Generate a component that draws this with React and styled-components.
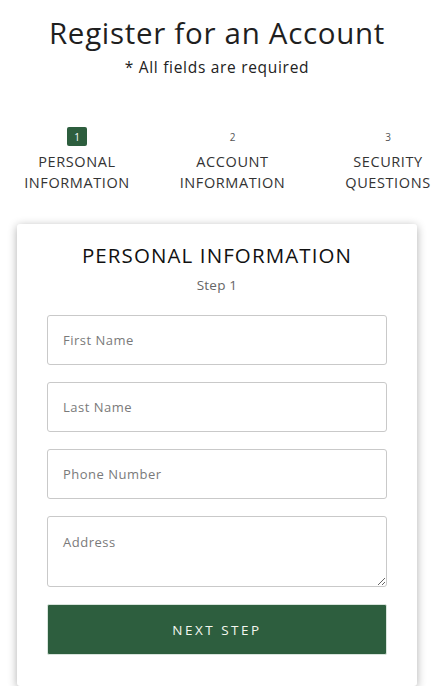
import React from 'react';
import styled, { createGlobalStyle } from 'styled-components';

const GlobalStyle = createGlobalStyle`
  html, body {
    margin: 0;
    padding: 0;
    background: #ffffff;
    overflow-x: hidden;
  }
  body {
    font-family: 'Open Sans', 'Liberation Sans', sans-serif;
    color: #222;
  }
  * {
    box-sizing: border-box;
  }
`;

const Page = styled.div`
  width: 442px;
  padding-top: 14px;
`;

const Header = styled.header`
  width: 434px;
  text-align: center;
`;

const Title = styled.h1`
  margin: 0;
  font-size: 29.5px;
  font-weight: 400;
  line-height: 38px;
  color: #1f1f1f;
  letter-spacing: 0.7px;
`;

const Subtitle = styled.p`
  margin: 4px 0 0;
  font-size: 15.5px;
  line-height: 22px;
  color: #222;
  letter-spacing: 0.7px;
`;

const Steps = styled.ol`
  list-style: none;
  margin: 0;
  padding: 0 0 0 21px;
  margin-top: 49px;
  display: grid;
  grid-template-columns: repeat(3, 112px);
  column-gap: 43.5px;
`;

const Step = styled.li`
  display: flex;
  flex-direction: column;
  align-items: center;
  text-align: center;
`;

const StepNumber = styled.span`
  width: 20px;
  height: 19px;
  border-radius: 2px;
  display: flex;
  align-items: center;
  justify-content: center;
  font-size: 10px;
  background: ${({ $active }) => ($active ? '#2d5e3e' : 'transparent')};
  color: ${({ $active }) => ($active ? '#ffffff' : '#555')};
`;

const StepLabel = styled.span`
  margin-top: 5px;
  font-size: 14.5px;
  line-height: 21px;
  color: #333;
  white-space: nowrap;
  letter-spacing: 0.6px;
`;

const Card = styled.section`
  width: 400px;
  margin: 31px 0 0 17px;
  background: #fff;
  border-radius: 3px;
  box-shadow: 0 2px 10px rgba(0, 0, 0, 0.32);
  padding: 17px 30px 31px;
  display: flex;
  flex-direction: column;
`;

const CardTitle = styled.h2`
  margin: 0;
  text-align: center;
  font-size: 20.5px;
  font-weight: 400;
  line-height: 28px;
  color: #111;
  letter-spacing: 1.1px;
`;

const CardStep = styled.p`
  margin: 6px 0 0;
  text-align: center;
  font-size: 13.5px;
  line-height: 20px;
  color: #666;
  letter-spacing: 0.2px;
`;

const Fields = styled.div`
  margin-top: 20px;
  display: flex;
  flex-direction: column;
  gap: 17px;
`;

const fieldStyle = `
  width: 100%;
  border: 1px solid #c9c9c9;
  border-radius: 3px;
  padding: 0 15px;
  font-family: 'Open Sans', 'Liberation Sans', sans-serif;
  font-size: 13px;
  letter-spacing: 0.5px;
  color: #333;
  background: #fff;
  outline: none;
  &::placeholder {
    color: #7a7a7a;
  }
`;

const Input = styled.input`
  ${fieldStyle}
  height: 50px;
`;

const TextArea = styled.textarea`
  ${fieldStyle}
  height: 71px;
  padding-top: 16px;
  resize: vertical;
  display: block;
`;

const NextButton = styled.button`
  margin-top: 17px;
  height: 51px;
  width: 100%;
  border: 1px solid #d8e4dc;
  border-radius: 2px;
  background: #2d5e3e;
  color: #f4f7ef;
  font-family: 'Open Sans', 'Liberation Sans', sans-serif;
  font-size: 13.5px;
  letter-spacing: 2.5px;
  cursor: pointer;
`;

const steps = [
  { n: 1, lines: ['PERSONAL', 'INFORMATION'] },
  { n: 2, lines: ['ACCOUNT', 'INFORMATION'] },
  { n: 3, lines: ['SECURITY', 'QUESTIONS'] },
];

export default function App() {
  return (
    <Page>
      <GlobalStyle />
      <Header>
        <Title>Register for an Account</Title>
        <Subtitle>* All fields are required</Subtitle>
      </Header>

      <Steps>
        {steps.map((s) => (
          <Step key={s.n}>
            <StepNumber $active={s.n === 1}>{s.n}</StepNumber>
            <StepLabel>
              {s.lines[0]}
              <br />
              {s.lines[1]}
            </StepLabel>
          </Step>
        ))}
      </Steps>

      <Card>
        <CardTitle>PERSONAL INFORMATION</CardTitle>
        <CardStep>Step 1</CardStep>
        <Fields>
          <Input placeholder="First Name" />
          <Input placeholder="Last Name" />
          <Input placeholder="Phone Number" />
          <TextArea placeholder="Address" />
        </Fields>
        <NextButton type="button">NEXT STEP</NextButton>
      </Card>
    </Page>
  );
}
